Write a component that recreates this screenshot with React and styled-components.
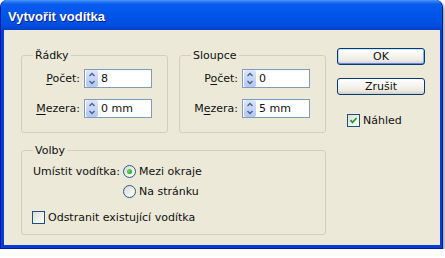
import React from 'react';
import styled, { createGlobalStyle } from 'styled-components';

const GlobalStyle = createGlobalStyle`
  html, body {
    margin: 0;
    background: #ffffff;
  }
  body {
    font-family: "DejaVu Sans", Tahoma, sans-serif;
    font-size: 11px;
    color: #111;
  }
`;

function SpinArrows() {
  return (
    <svg width="12" height="17" viewBox="0 0 12 17">
      <polyline points="3.5,6 6,3.5 8.5,6" fill="none" stroke="#4D6185" strokeWidth="1.4" />
      <polyline points="3.5,11 6,13.5 8.5,11" fill="none" stroke="#4D6185" strokeWidth="1.4" />
    </svg>
  );
}

function CheckMark() {
  return (
    <svg width="11" height="11" viewBox="0 0 11 11">
      <polyline points="2.5,5.2 4.5,7.4 8.6,3" fill="none" stroke="#21A121" strokeWidth="1.8" />
    </svg>
  );
}

function Field({ label, value }) {
  return (
    <>
      <Label>{label}</Label>
      <FieldBox>
        <Spin><SpinArrows /></Spin>
        <Value>{value}</Value>
      </FieldBox>
    </>
  );
}

function App() {
  return (
    <>
      <GlobalStyle />
      <Window>
        <TitleBar>Vytvořit vodítka</TitleBar>
        <Body>
          <Left>
            <GroupRow>
              <Group>
                <Legend>Řádky</Legend>
                <FieldGrid>
                  <Field label={<><u>P</u>očet:</>} value="8" />
                  <Field label={<><u>M</u>ezera:</>} value="0 mm" />
                </FieldGrid>
              </Group>
              <Group>
                <Legend>Sloupce</Legend>
                <FieldGrid>
                  <Field label={<>P<u>o</u>čet:</>} value="0" />
                  <Field label={<>M<u>e</u>zera:</>} value="5 mm" />
                </FieldGrid>
              </Group>
            </GroupRow>
            <Group $wide>
              <Legend>Volby</Legend>
              <PlaceGrid>
                <Label $left>Umístit vodítka:</Label>
                <Option>
                  <Radio $checked />
                  Mezi okraje
                </Option>
                <span />
                <Option>
                  <Radio />
                  Na stránku
                </Option>
              </PlaceGrid>
              <CheckRow $indent={-1} $top={6}>
                <CheckBox />
                Odstranit existující vodítka
              </CheckRow>
            </Group>
          </Left>
          <Right>
            <Button $default>OK</Button>
            <Button>Zrušit</Button>
            <CheckRow $indent={10} $top={2}>
              <CheckBox><CheckMark /></CheckBox>
              Náhled
            </CheckRow>
          </Right>
        </Body>
      </Window>
    </>
  );
}

const Window = styled.div`
  width: 443px;
  box-sizing: border-box;
  background: #0B3BD6;
  border: 1px solid #001C9C;
  border-top: 0;
  border-radius: 7px 7px 0 0;
  box-shadow: 1px 3px 5px rgba(0, 0, 0, 0.55);
  overflow: hidden;
`
const TitleBar = styled.div`
  height: 30px;
  box-sizing: border-box;
  display: flex;
  align-items: center;
  padding: 2px 0 0 7px;
  background: linear-gradient(180deg, #4A9BFF 0%, #2A78F5 6%, #0A5CEE 14%, #0055EA 45%, #0051E4 75%, #0048D9 92%, #003FC4 100%);
  color: #fff;
  font-family: "Liberation Sans", Arial, sans-serif;
  font-weight: 700;
  font-size: 13px;
  text-shadow: 1px 1px 0 #0A1C8A;
`
const Body = styled.div`
  margin: 0 2px 3px 3px;
  padding: 19px 15px 10px 17px;
  background: #ECE9D8;
  display: flex;
  gap: 11px;
`
const Left = styled.div`
  width: 305px;
  display: flex;
  flex-direction: column;
  gap: 11px;
`
const GroupRow = styled.div`
  display: flex;
  gap: 11px;
`
const Group = styled.fieldset`
  margin: 0;
  padding: 0 14px ${p => (p.$wide ? '7px' : '14px')} 11px;
  width: ${p => (p.$wide ? '305px' : '147px')};
  box-sizing: border-box;
  min-width: 0;
  border: 1px solid #D0D0BF;
  border-radius: 3px;
`
const Legend = styled.legend`
  padding: 0 2px;
  line-height: 13px;
`
const FieldGrid = styled.div`
  margin-top: 7px;
  display: grid;
  grid-template-columns: 47px 68px;
  column-gap: 4px;
  row-gap: 11px;
  align-items: center;
`
const Label = styled.span`
  text-align: ${p => (p.$left ? 'left' : 'right')};
  white-space: nowrap;
  u {
    text-underline-offset: 2px;
  }
`
const FieldBox = styled.div`
  height: 19px;
  box-sizing: border-box;
  display: flex;
  align-items: center;
  padding: 0 1px;
  border: 1px solid #7F9DB9;
  background: #fff;
`
const Spin = styled.span`
  width: 12px;
  height: 17px;
  display: flex;
  border-radius: 2px;
  background: linear-gradient(180deg, #DCE6FB 0%, #C6D6F8 50%, #B3C7F3 100%);
`
const Value = styled.span`
  margin-left: 3px;
  white-space: nowrap;
`
const PlaceGrid = styled.div`
  margin-top: 4px;
  display: grid;
  grid-template-columns: 85px auto;
  grid-auto-rows: 20px;
  column-gap: 5px;
  align-items: center;
`
const Option = styled.label`
  display: flex;
  align-items: center;
  gap: 3px;
  white-space: nowrap;
`
const Radio = styled.span`
  width: 13px;
  height: 13px;
  box-sizing: border-box;
  border-radius: 50%;
  border: 1px solid #2A5A8E;
  background: linear-gradient(135deg, #D8D8D0 0%, #F2F2EE 60%, #FFFFFF 100%);
  display: flex;
  align-items: center;
  justify-content: center;
  &::after {
    content: '';
    display: ${p => (p.$checked ? 'block' : 'none')};
    width: 5px;
    height: 5px;
    border-radius: 50%;
    background: radial-gradient(circle at 35% 35%, #6BE06B 0%, #2DB02D 60%, #1B8A1B 100%);
  }
`
const CheckRow = styled.label`
  margin-top: ${p => p.$top}px;
  margin-left: ${p => p.$indent}px;
  height: 20px;
  display: flex;
  align-items: center;
  gap: 3px;
  white-space: nowrap;
`
const CheckBox = styled.span`
  width: 13px;
  height: 13px;
  box-sizing: border-box;
  border: 1px solid #1C5180;
  background: linear-gradient(135deg, #DCDCD7 0%, #F4F4F0 65%, #FFFFFF 100%);
  display: flex;
  align-items: center;
  justify-content: center;
`
const Right = styled.div`
  width: 88px;
  margin-top: -1px;
  display: flex;
  flex-direction: column;
  gap: 13px;
`
const Button = styled.button`
  height: 17px;
  padding: 0;
  border: 1px solid #003C74;
  border-radius: 3px;
  background: linear-gradient(180deg, #FFFFFF 0%, #F6F5F0 40%, #ECEBE4 75%, #D6D0C5 100%);
  font-family: "DejaVu Sans", Tahoma, sans-serif;
  font-size: 11px;
  line-height: 15px;
  color: #111;
  box-shadow: ${p => (p.$default
    ? 'inset 0 1px 0 #CEE7FF, inset 0 -1px 0 #6982EE, inset 1px 0 0 #BCD4F6, inset -1px 0 0 #89ADE4'
    : 'inset 0 -1px 0 #D6D0C5')};
`

export default App;
